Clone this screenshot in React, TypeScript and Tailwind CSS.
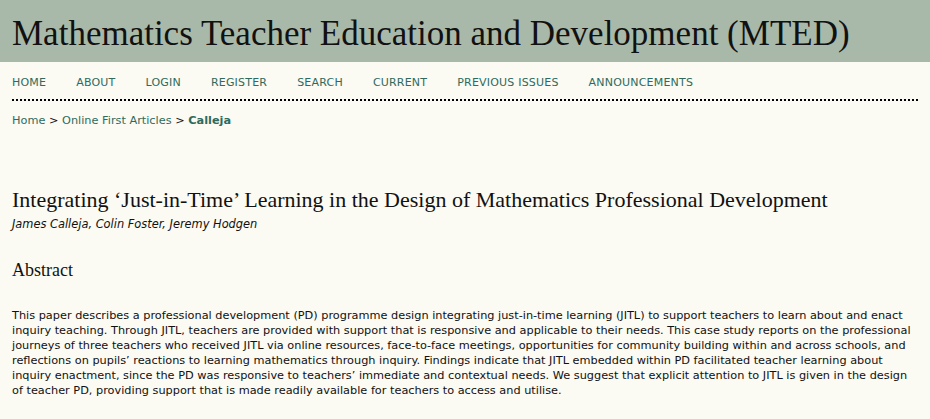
const navItems = [
  'Home',
  'About',
  'Login',
  'Register',
  'Search',
  'Current',
  'Previous Issues',
  'Announcements',
];

const abstractLines = [
  'This paper describes a professional development (PD) programme design integrating just-in-time learning (JITL) to support teachers to learn about and enact',
  'inquiry teaching. Through JITL, teachers are provided with support that is responsive and applicable to their needs. This case study reports on the professional',
  'journeys of three teachers who received JITL via online resources, face-to-face meetings, opportunities for community building within and across schools, and',
  'reflections on pupils\u2019 reactions to learning mathematics through inquiry. Findings indicate that JITL embedded within PD facilitated teacher learning about',
  'inquiry enactment, since the PD was responsive to teachers\u2019 immediate and contextual needs. We suggest that explicit attention to JITL is given in the design',
  'of teacher PD, providing support that is made readily available for teachers to access and utilise.',
];

const serif = "font-['Liberation_Serif',Georgia,serif]";
const sans = "font-['DejaVu_Sans',Verdana,sans-serif]";

function App() {
  return (
    <div className="min-h-screen bg-[#fbfaf3] text-[#111]">
      {/* Journal banner */}
      <header className="h-[62px] bg-[#a9b9a9] pl-3 pt-[14px]">
        <h1 className={`${serif} text-[35px] leading-[40px] text-[#111]`}>
          Mathematics Teacher Education and Development (MTED)
        </h1>
      </header>

      <div className="px-3">
        {/* Main navigation */}
        <nav className="border-b-2 border-dotted border-black pt-[14px] pb-[9px]">
          <ul className={`${sans} flex gap-[30px] text-[11px] leading-[14px] uppercase tracking-[0.2px] text-[#2e6b5e]`}>
            {navItems.map((item) => (
              <li key={item}>{item}</li>
            ))}
          </ul>
        </nav>

        {/* Breadcrumb */}
        <div className={`${sans} mt-[12px] text-[11.3px] leading-[15px] text-[#2e6b5e]`}>
          <span>Home</span>
          <span className="text-[#111]"> &gt; </span>
          <span>Online First Articles</span>
          <span className="text-[#111]"> &gt; </span>
          <span className="font-bold">Calleja</span>
        </div>

        {/* Article */}
        <h2 className={`${serif} mt-[59px] text-[22px] leading-[26px]`}>
          Integrating ‘Just-in-Time’ Learning in the Design of Mathematics Professional Development
        </h2>
        <div className={`${sans} mt-[4px] text-[11.4px] leading-[14px] italic`}>
          James Calleja, Colin Foster, Jeremy Hodgen
        </div>

        <h3 className={`${serif} mt-[28px] text-[18px] leading-[22px]`}>Abstract</h3>

        <p className={`${sans} mt-[27px] text-[11.3px] leading-[15px] text-[#111] whitespace-nowrap`}>
          {abstractLines.map((line, i) => (
            <span key={i} className="block">
              {line}
            </span>
          ))}
        </p>
      </div>
    </div>
  );
}

export default App;
